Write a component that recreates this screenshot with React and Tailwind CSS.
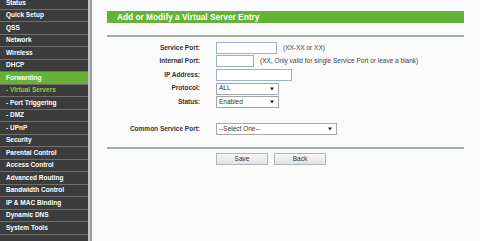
const menu = [
  { label: 'Status' },
  { label: 'Quick Setup' },
  { label: 'QSS' },
  { label: 'Network' },
  { label: 'Wireless' },
  { label: 'DHCP' },
  { label: 'Forwarding', active: true },
  { label: '- Virtual Servers', current: true },
  { label: '- Port Triggering' },
  { label: '- DMZ' },
  { label: '- UPnP' },
  { label: 'Security' },
  { label: 'Parental Control' },
  { label: 'Access Control' },
  { label: 'Advanced Routing' },
  { label: 'Bandwidth Control' },
  { label: 'IP & MAC Binding' },
  { label: 'Dynamic DNS' },
  { label: 'System Tools' },
];

const Arrow = () => (
  <svg width="4" height="4" viewBox="0 0 4 4" className="shrink-0">
    <path d="M0 0.5 L4 0.5 L2 3.5 Z" fill="#222" />
  </svg>
);

const Select = ({ value, width }) => (
  <div className={`${width} h-[12px] bg-white border border-[#a7a7a7] flex items-center justify-between pl-[2px] pr-[4px] text-[#333]`}>
    <span>{value}</span>
    <Arrow />
  </div>
);

const Row = ({ label, children }) => (
  <div className="flex items-center h-[13.6px]">
    <div className="w-[109px] shrink-0 text-right font-bold text-[#333] pr-[16px]">{label}</div>
    <div className="flex items-center gap-[6px]">{children}</div>
  </div>
);

export default function App() {
  return (
    <div className="flex w-[480px] h-[241px] overflow-hidden font-['Liberation_Sans',Arial,sans-serif] text-[6.5px] leading-none">
      {/* Sidebar */}
      <div className="w-[88px] h-full bg-[#3c3c3c] overflow-hidden">
        <div className="-mt-[3px]">
          {menu.map((m) => (
            <div
              key={m.label}
              className={`h-[12.5px] flex items-center pl-[6px] font-bold border-b border-[#6e6e6e] ${
                m.active ? 'bg-[#66b234] text-white' : m.current ? 'text-[#9ccd3c]' : 'text-white'
              }`}
            >
              {m.label}
            </div>
          ))}
        </div>
      </div>
      <div className="w-[2px] h-full bg-[#c9c9c9]" />
      <div className="w-[2px] h-full bg-[#9c9c9c]" />

      {/* Main */}
      <div className="flex-1 h-full bg-[#fafafa] pl-[15px] pt-[11px]">
        <div className="w-[357px] h-[12px] bg-[#64b338] flex items-center pl-[10px] text-white font-bold text-[8.3px]">
          Add or Modify a Virtual Server Entry
        </div>
        <div className="w-[357px] h-[2px] bg-[#a3b5a6] mt-[12px]" />

        <div className="mt-[4px]">
          <Row label="Service Port:">
            <div className="w-[61px] h-[12px] bg-white border border-[#9fb0c5]" />
            <span className="text-[#444]">(XX-XX or XX)</span>
          </Row>
          <Row label="Internal Port:">
            <div className="w-[38px] h-[12px] bg-white border border-[#9fb0c5]" />
            <span className="text-[#444]">(XX, Only valid for single Service Port or leave a blank)</span>
          </Row>
          <Row label="IP Address:">
            <div className="w-[76px] h-[12px] bg-white border border-[#9fb0c5]" />
          </Row>
          <Row label="Protocol:">
            <Select value="ALL" width="w-[63px]" />
          </Row>
          <Row label="Status:">
            <Select value="Enabled" width="w-[63px]" />
          </Row>
          <div className="h-[13.6px]" />
          <Row label="Common Service Port:">
            <Select value="--Select One--" width="w-[121px]" />
          </Row>
        </div>

        <div className="w-[357px] h-[2px] bg-[#a3b5a6] mt-[11px]" />
        <div className="flex gap-[6px] ml-[109px] mt-[4px]">
          <button className="w-[52px] h-[12px] border border-[#b5b5b5] bg-gradient-to-b from-[#f6f6f6] to-[#e2e2e2] text-[#333] text-[6.5px] leading-none">
            Save
          </button>
          <button className="w-[52px] h-[12px] border border-[#b5b5b5] bg-gradient-to-b from-[#f6f6f6] to-[#e2e2e2] text-[#333] text-[6.5px] leading-none">
            Back
          </button>
        </div>
      </div>
    </div>
  );
}
